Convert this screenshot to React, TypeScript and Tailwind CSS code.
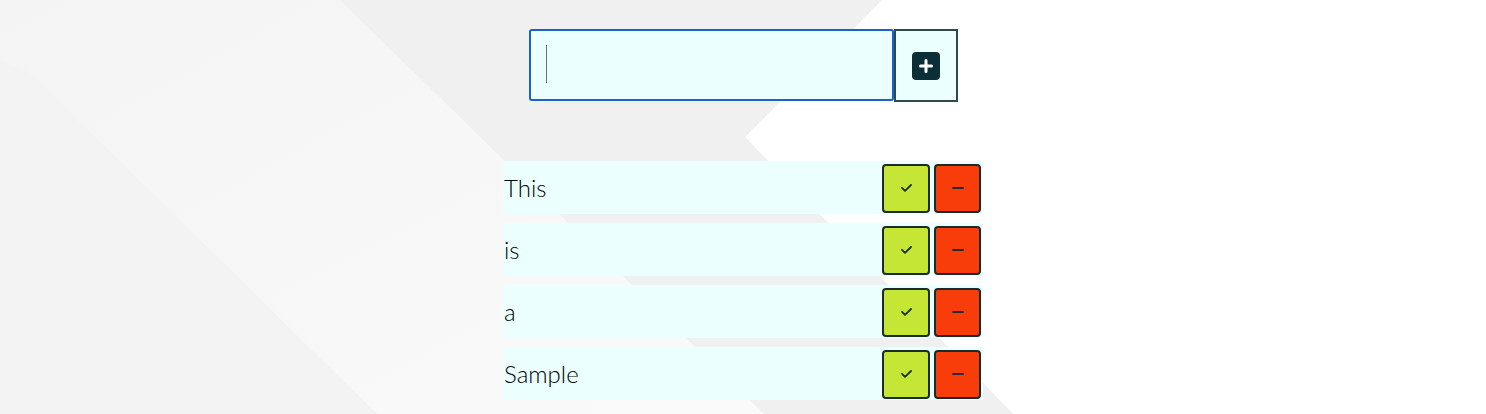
import React, { useState } from 'react'

const initialItems = ['This', 'is', 'a', 'Sample']

function Backdrop() {
  return (
    <svg
      className="absolute inset-0 w-full h-full"
      viewBox="0 0 1486 414"
      preserveAspectRatio="none"
      aria-hidden="true"
    >
      <defs>
        <linearGradient id="band" x1="0" y1="0" x2="1" y2="1">
          <stop offset="0" stopColor="#f4f4f4" />
          <stop offset="1" stopColor="#fafafa" />
        </linearGradient>
      </defs>
      <rect width="1486" height="414" fill="#ffffff" />
      {/* grey field left of the white chevron */}
      <polygon points="0,0 882,0 745,137 1013,414 0,414" fill="#f4f4f4" />
      {/* lighter diagonal band */}
      <polygon points="0,0 340,0 764,414 377,414 30,73 0,60" fill="url(#band)" />
      {/* bottom-left patch */}
      <polygon points="0,60 30,73 377,414 0,414" fill="#f3f3f3" />
      {/* darker band under the list */}
      <polygon points="340,0 882,0 745,137 1013,414 764,414" fill="#f0f0f0" />
    </svg>
  )
}

function CheckIcon() {
  return (
    <svg width="11" height="8" viewBox="0 0 11 8" fill="none">
      <polyline
        points="1,3.8 4,6.8 10,1"
        stroke="#1d3030"
        strokeWidth="1.8"
        strokeLinecap="round"
        strokeLinejoin="round"
      />
    </svg>
  )
}

function MinusIcon() {
  return (
    <svg width="12" height="4" viewBox="0 0 12 4" fill="none">
      <line x1="1" y1="2" x2="11" y2="2" stroke="#2a2a2a" strokeWidth="2" strokeLinecap="round" />
    </svg>
  )
}

function SquarePlus() {
  return (
    <svg width="28" height="28" viewBox="0 0 28 28">
      <rect width="28" height="28" rx="4" fill="#0b2e37" />
      <path d="M14 8.5v11M8.5 14h11" stroke="#ffffff" strokeWidth="3" strokeLinecap="round" />
    </svg>
  )
}

export default function App() {
  const [items, setItems] = useState(initialItems)
  const [text, setText] = useState('')

  const addItem = () => {
    if (!text.trim()) return
    setItems([...items, text.trim()])
    setText('')
  }

  return (
    <div className="relative w-full min-h-[414px] overflow-hidden font-['Lato',sans-serif]">
      <Backdrop />

      <div className="relative flex flex-col items-center pt-[29px]">
        {/* Add item */}
        <div className="flex items-start">
          <div className="relative w-[365px] h-[72px]">
            <input
              value={text}
              onChange={e => setText(e.target.value)}
              className="w-full h-full px-4 text-[32px] bg-[#ebffff] border-2 border-[#1a62c6] rounded-[3px] outline-none caret-transparent"
            />
            {/* text caret */}
            <span className="absolute left-[17px] top-[16px] w-px h-[38px] bg-[#6e6e6e]" />
          </div>
          <button
            onClick={addItem}
            className="w-[64px] h-[73px] flex items-center justify-center bg-[#ebffff] border-2 border-[#2e4a4c]"
          >
            <SquarePlus />
          </button>
        </div>

        {/* List */}
        <ul className="mt-[59px] w-[480px] flex flex-col gap-[9px]">
          {items.map((item, i) => (
            <li
              key={i}
              className="h-[53px] flex items-center justify-between bg-[#ebffff] pl-px pr-[2px]"
            >
              <span className="text-[24px] font-light text-black">{item}</span>
              <div className="flex gap-[4px] pt-px">
                <button className="w-[48px] h-[49px] flex items-center justify-center rounded-[4px] border-2 border-[#1b2a2a] bg-[#c5e635]">
                  <CheckIcon />
                </button>
                <button
                  onClick={() => setItems(items.filter((_, j) => j !== i))}
                  className="w-[47px] h-[49px] flex items-center justify-center rounded-[4px] border-2 border-[#1b2a2a] bg-[#f93d0a]"
                >
                  <MinusIcon />
                </button>
              </div>
            </li>
          ))}
        </ul>
      </div>
    </div>
  )
}
